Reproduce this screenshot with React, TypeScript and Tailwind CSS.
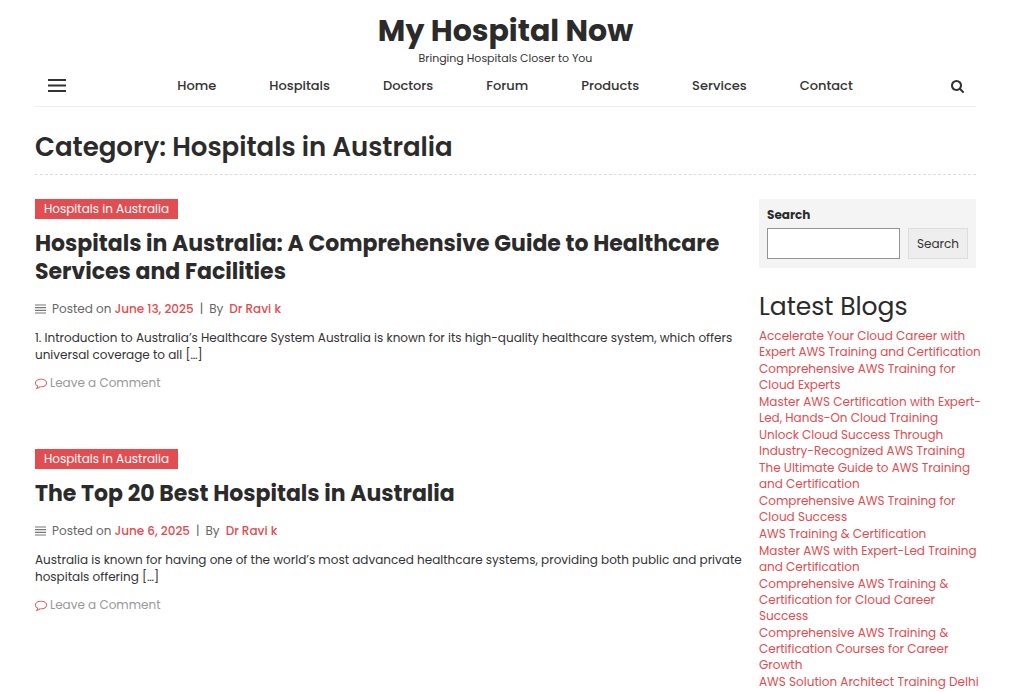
import React from 'react';

const navItems = ['Home', 'Hospitals', 'Doctors', 'Forum', 'Products', 'Services', 'Contact'];

const posts = [
  {
    title: 'Hospitals in Australia: A Comprehensive Guide to Healthcare Services and Facilities',
    date: 'June 13, 2025',
    excerpt:
      '1. Introduction to Australia’s Healthcare System Australia is known for its high-quality healthcare system, which offers universal coverage to all […]',
  },
  {
    title: 'The Top 20 Best Hospitals in Australia',
    date: 'June 6, 2025',
    excerpt:
      'Australia is known for having one of the world’s most advanced healthcare systems, providing both public and private hospitals offering […]',
  },
];

const blogs = [
  'Accelerate Your Cloud Career with Expert AWS Training and Certification',
  'Comprehensive AWS Training for Cloud Experts',
  'Master AWS Certification with Expert-Led, Hands-On Cloud Training',
  'Unlock Cloud Success Through Industry-Recognized AWS Training',
  'The Ultimate Guide to AWS Training and Certification',
  'Comprehensive AWS Training for Cloud Success',
  'AWS Training & Certification',
  'Master AWS with Expert-Led Training and Certification',
  'Comprehensive AWS Training & Certification for Cloud Career Success',
  'Comprehensive AWS Training & Certification Courses for Career Growth',
  'AWS Solution Architect Training Delhi',
];

const SearchIcon = () => (
  <svg viewBox="0 0 1664 1792" className="w-[13px] h-[14px]" fill="currentColor" aria-hidden="true">
    <path d="M1152 832q0-185-131.5-316.5T704 384 387.5 515.5 256 832t131.5 316.5T704 1280t316.5-131.5T1152 832zm512 832q0 52-38 90t-90 38q-54 0-90-38l-343-342q-179 124-399 124-143 0-273.5-55.5t-225-150-150-225T0 832t55.5-273.5 150-225 225-150T704 128t273.5 55.5 225 150 150 225T1408 832q0 220-124 399l343 343q37 37 37 90z" />
  </svg>
);

const CommentIcon = () => (
  <svg viewBox="0 0 1792 1792" className="size-3" fill="#e14d50" aria-hidden="true">
    <path d="M896 384q-204 0-381.5 69.5T232.5 641 128 896q0 112 71.5 213.5T401 1285l87 50-27 96q-24 91-70 172 152-63 275-171l43-38 57 6q69 8 130 8 204 0 381.5-69.5t282-187.5T1664 896t-104.5-255-282-187.5T896 384zm896 512q0 174-120 321.5t-326 233-450 85.5q-70 0-145-8-198 175-460 242-49 14-114 22h-5q-15 0-27-10.5t-16-27.5v-1q-3-4-.5-12t2-10 4.5-9.5l6-9 7-8.5 8-9q7-8 31-34.5t34.5-38 31-39.5 32.5-51 27-59 26-76q-157-89-247.5-220T0 896q0-130 71-248.5t191-204.5 286-136.5T896 256t348 50.5T1530 443t191 204.5T1792 896z" />
  </svg>
);

const Header: React.FC = () => (
  <header className="border-b border-[#eeeeee]">
    <div className="pt-3 text-center">
      <h1 className="text-[30px] leading-[38px] font-bold">
        <a href="#home">My Hospital Now</a>
      </h1>
      <p className="text-[11px] leading-4 text-[#333333]">Bringing Hospitals Closer to You</p>
    </div>
    <div className="flex items-center justify-between h-10 px-3 text-[#333333]">
      <button type="button" aria-label="Menu" className="w-5">
        <svg viewBox="0 0 20 14" className="w-5 h-[14px]" stroke="currentColor" strokeWidth="2" aria-hidden="true">
          <path d="M1 1h18M1 6.5h18M1 12h18" />
        </svg>
      </button>
      <nav className="ml-3">
        <ul className="flex gap-[53px] text-[13px] leading-5 font-medium">
          {navItems.map((item) => (
            <li key={item}>
              <a href={`#${item.toLowerCase()}`}>{item}</a>
            </li>
          ))}
        </ul>
      </nav>
      <button type="button" aria-label="Open search">
        <SearchIcon />
      </button>
    </div>
  </header>
);

const Post: React.FC<{ title: string; date: string; excerpt: string }> = ({ title, date, excerpt }) => (
  <article className="pb-[58px]">
    <a href="#category" className="block w-fit h-5 px-[9px] bg-[#e14d50] text-white text-xs leading-5">
      Hospitals in Australia
    </a>
    <h2 className="mt-[11px] text-[22px] leading-7 font-bold">
      <a href="#post">{title}</a>
    </h2>
    <div className="flex items-center mt-[14px] text-xs leading-[17px] text-[#666666]">
      <svg viewBox="0 0 11 10" className="w-[11px] h-[10px] mr-[6px]" stroke="#777777" strokeWidth="1.2" aria-hidden="true">
        <path d="M0 1h11M0 3.7h11M0 6.3h11M0 9h11" />
      </svg>
      <span>Posted on</span>
      <a href="#date" className="ml-[3px] font-medium text-[#e14d50]">{date}</a>
      <span className="mx-[6px]">|</span>
      <span>By</span>
      <a href="#author" className="ml-[6px] font-medium text-[#e14d50]">Dr Ravi k</a>
    </div>
    <p className="mt-3 text-xs leading-[17px] text-[#333333]">{excerpt}</p>
    <div className="flex items-center gap-[3px] mt-[11px] text-xs leading-[17px] text-[#999999]">
      <CommentIcon />
      <a href="#comment">Leave a Comment</a>
    </div>
  </article>
);

const Sidebar: React.FC = () => (
  <aside className="w-[217px] shrink-0">
    <form className="p-2 pb-[9px] bg-[#f4f4f4]" onSubmit={(e) => e.preventDefault()}>
      <label htmlFor="search" className="block text-xs leading-4 font-bold">Search</label>
      <div className="flex gap-2 mt-[5px]">
        <input id="search" type="search" className="flex-1 min-w-0 h-[31px] px-2 bg-white border border-[#949494] text-xs" />
        <button type="submit" className="w-[60px] h-[31px] bg-[#eeeeee] border border-[#dddddd] text-xs text-[#333333]">Search</button>
      </div>
    </form>
    <h2 className="mt-6 text-[25px] leading-[30px]">Latest Blogs</h2>
    <ul className="flex flex-col gap-px mt-[6px] -mr-2 text-xs leading-4 text-[#e14d50]">
      {blogs.map((blog) => (
        <li key={blog}>
          <a href="#blog">{blog}</a>
        </li>
      ))}
    </ul>
  </aside>
);

const App: React.FC = () => {
  return (
    <div className="h-screen overflow-hidden pl-[35px] pr-12 bg-white text-[#2b2b2b] font-[Poppins,Inter,sans-serif]">
      <Header />
      <h1 className="pt-[21px] pb-[7px] border-b border-dashed border-[#dddddd] text-[26px] leading-[39px] font-semibold">
        Category: Hospitals in Australia
      </h1>
      <div className="flex gap-4 pt-6">
        <main className="flex-1 min-w-0">
          {posts.map((post) => (
            <Post key={post.title} {...post} />
          ))}
        </main>
        <Sidebar />
      </div>
    </div>
  );
};

export default App;
